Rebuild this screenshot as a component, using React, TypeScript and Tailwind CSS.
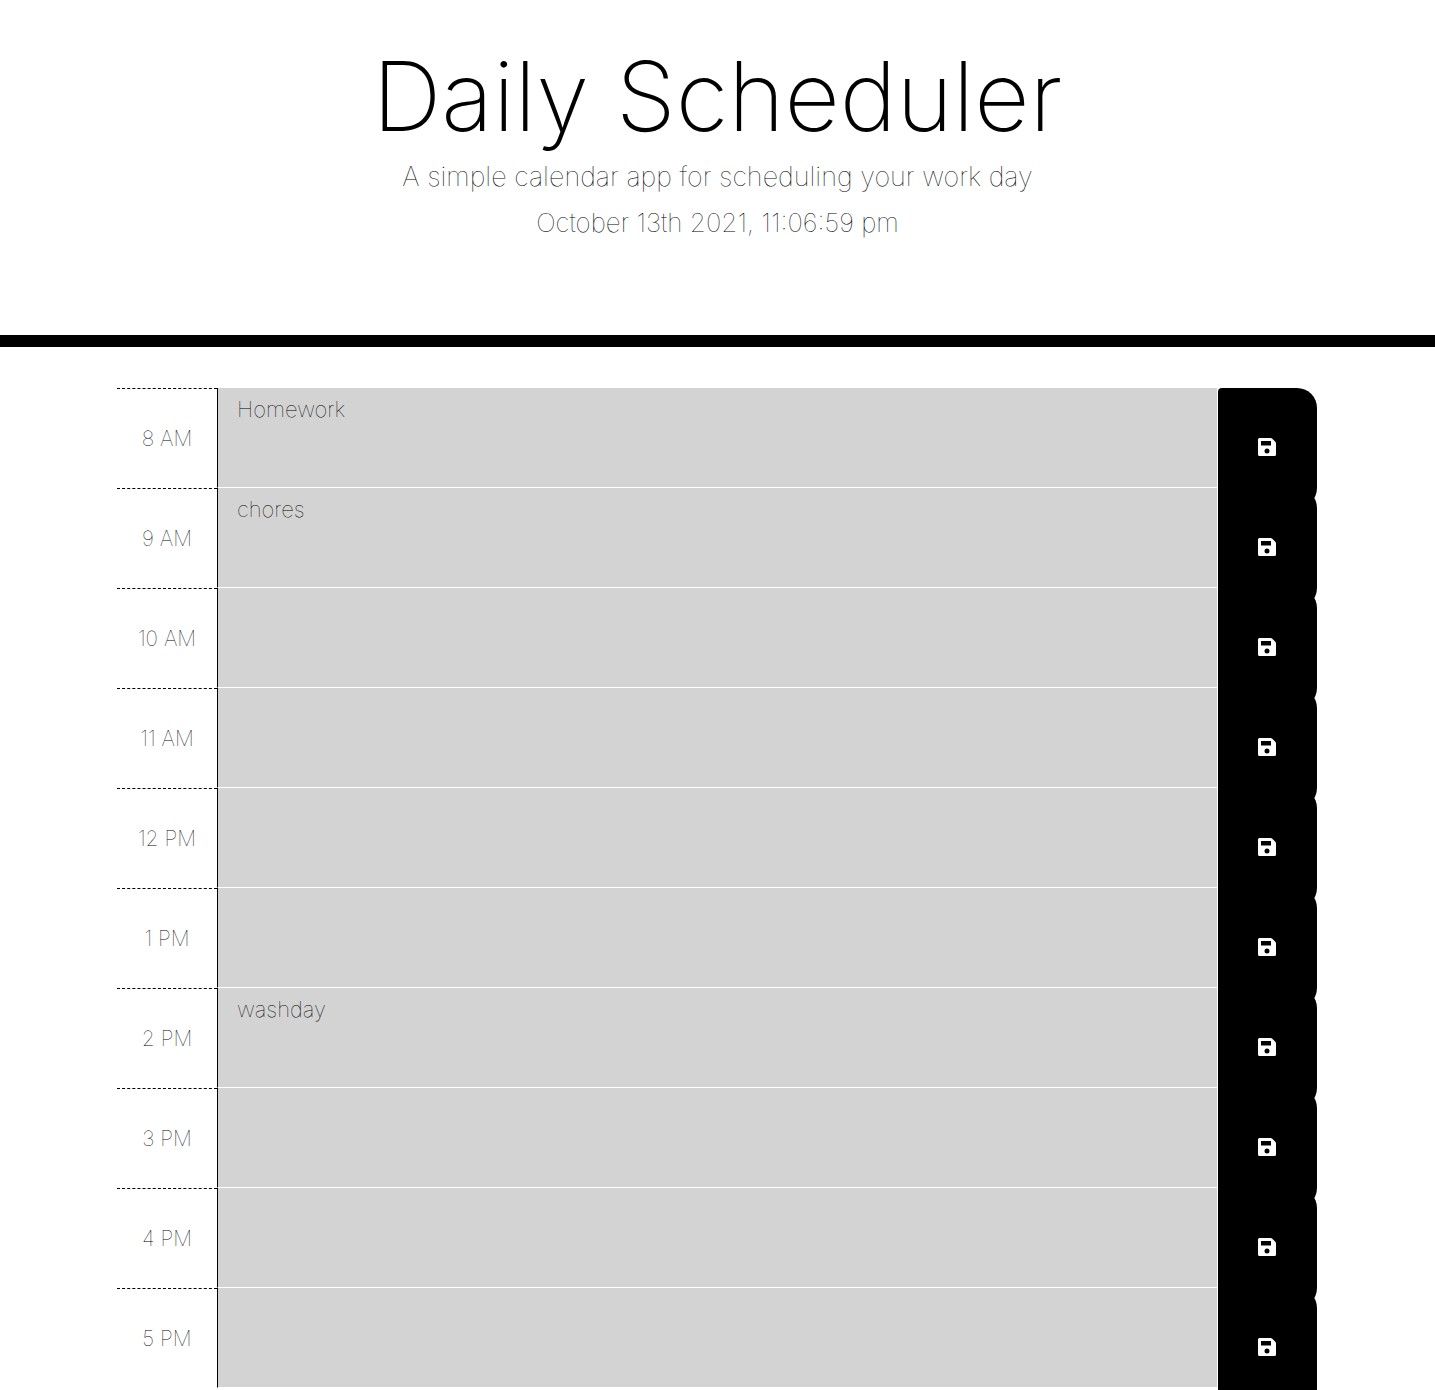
const rows = [
  { hour: "8 AM", text: "Homework" },
  { hour: "9 AM", text: "chores" },
  { hour: "10 AM", text: "" },
  { hour: "11 AM", text: "" },
  { hour: "12 PM", text: "" },
  { hour: "1 PM", text: "" },
  { hour: "2 PM", text: "washday" },
  { hour: "3 PM", text: "" },
  { hour: "4 PM", text: "" },
  { hour: "5 PM", text: "" },
];

function SaveIcon() {
  return (
    <svg viewBox="0 0 18 18" className="size-[18px]" fill="currentColor" aria-hidden="true">
      <path
        fillRule="evenodd"
        d="M1.500 0H12.600Q13.600 0 14.300 .7L17.300 3.700Q18 4.400 18 5.400V16.500a1.500 1.500 0 0 1-1.500 1.500h-15A1.500 1.500 0 0 1 0 16.500v-15A1.500 1.500 0 0 1 1.500 0ZM3 3v4.500h10V3ZM9 10.400a2.500 2.500 0 1 0 0 5a2.500 2.500 0 0 0 0-5Z"
      />
    </svg>
  );
}

export default function App() {
  return (
    <div className="h-screen overflow-hidden bg-white font-['Inter',sans-serif] font-thin text-black">
      <header className="border-b-12 border-black px-6 pt-10 pb-24 text-center">
        <h1 className="text-8xl leading-[112px] font-[150]">Daily Scheduler</h1>
        <p className="mt-2 text-[27px] leading-[33px]">A simple calendar app for scheduling your work day</p>
        <p className="mt-[13px] text-[26px] leading-[33px]">October 13th 2021, 11:06:59 pm</p>
      </header>
      <main className="mx-auto mt-[41px] w-full max-w-[1201px] pr-px">
        {rows.map(({ hour, text }) => (
          <div key={hour} className="flex h-[100px]">
            <label
              htmlFor={hour}
              className="flex w-[100px] items-center justify-center border-t border-dashed border-black text-[21px]"
            >
              {hour}
            </label>
            <textarea
              id={hour}
              defaultValue={text}
              className="h-[100px] min-w-0 flex-1 resize-none border-r border-b border-l border-r-white border-b-white border-l-black bg-[#d3d3d3] px-[19px] py-1.5 text-[22px] leading-[30px] outline-none"
            />
            <button
              type="button"
              aria-label={"Save " + hour}
              className="flex h-[120px] w-[99px] items-center justify-center rounded-l rounded-r-[20px] bg-black pr-px pb-0.5 text-white"
            >
              <SaveIcon />
            </button>
          </div>
        ))}
      </main>
    </div>
  );
}
